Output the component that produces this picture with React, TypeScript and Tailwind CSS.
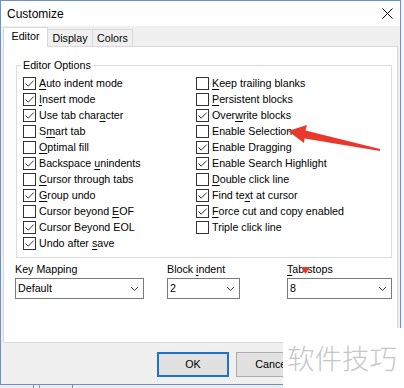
import React from "react";

const FONT = { fontFamily: '"Liberation Sans", Arial, sans-serif' };

function Mn({ t }: { t: string }) {
  const i = t.indexOf("&");
  if (i < 0) return <>{t}</>;
  return (
    <>
      {t.slice(0, i)}
      <span className="underline underline-offset-[2px]">{t.charAt(i + 1)}</span>
      {t.slice(i + 2)}
    </>
  );
}

function Box({ checked }: { checked: boolean }) {
  return (
    <span className="w-[13px] h-[13px] border border-[#333333] bg-white shrink-0 flex items-center justify-center">
      {checked && (
        <svg width="11" height="11" viewBox="0 0 11 11">
          <path d="M1.5 5.5 L4.2 8.2 L9.6 2.6" stroke="#333" strokeWidth="1" fill="none" />
        </svg>
      )}
    </span>
  );
}

function Check({ label, checked }: { label: string; checked: boolean }) {
  return (
    <div className="h-[16px] flex items-center gap-[3px] whitespace-nowrap">
      <Box checked={checked} />
      <span className="leading-[14px]">
        <Mn t={label} />
      </span>
    </div>
  );
}

const left: [string, boolean][] = [
  ["&Auto indent mode", true],
  ["&Insert mode", true],
  ["Use tab char&acter", true],
  ["S&mart tab", false],
  ["&Optimal fill", false],
  ["Backspace &unindents", true],
  ["&Cursor through tabs", false],
  ["&Group undo", true],
  ["Cursor beyond &EOF", false],
  ["Cursor Beyond EOL", true],
  ["Undo after &save", true],
];

const right: [string, boolean][] = [
  ["&Keep trailing blanks", false],
  ["&Persistent blocks", false],
  ["Over&write blocks", true],
  ["Enable Selection", false],
  ["Enable Dragging", true],
  ["Enable Search Highlight", true],
  ["&Double click line", false],
  ["Find te&xt at cursor", true],
  ["&Force cut and copy enabled", true],
  ["Triple click line", false],
];

function Chevron() {
  return (
    <svg width="9" height="6" viewBox="0 0 9 6">
      <path d="M1 1 L4.5 4.5 L8 1" stroke="#333" strokeWidth="1" fill="none" />
    </svg>
  );
}

function Combo({ w, value }: { w: string; value: string }) {
  return (
    <div className={`${w} h-[21px] border border-[#7a7a7a] bg-white flex items-center justify-between pl-[2px] pr-[4px]`}>
      <span>{value}</span>
      <Chevron />
    </div>
  );
}

export default function App() {
  return (
    <div className="w-[404px] h-[388px] bg-[#f4f4f4] overflow-hidden relative text-[10.7px] text-black" style={FONT}>
      <div className="w-[401px] h-[385px] border border-[#6c92c0] bg-[#f0f0f0] flex flex-col">
        {/* title bar */}
        <div className="h-[25px] shrink-0 bg-white flex items-center justify-between pl-[6px] pr-[7px]">
          <span className="text-[12px]">Customize</span>
          <svg width="11" height="11" viewBox="0 0 11 11">
            <path d="M0.5 0.5 L10.5 10.5 M10.5 0.5 L0.5 10.5" stroke="#000" strokeWidth="1" />
          </svg>
        </div>
        {/* tabs */}
        <div className="h-[20px] shrink-0 flex items-end pl-[2px] relative z-10">
          <div className="w-[45px] h-[20px] -mb-px bg-white border border-b-0 border-[#d9d9d9] flex items-center justify-center pb-[2px]">
            Editor
          </div>
          <div className="w-[45px] h-[17px] border border-l-0 border-b-0 border-[#d9d9d9] flex items-center justify-center">
            Display
          </div>
          <div className="w-[40px] h-[17px] border border-l-0 border-b-0 border-[#d9d9d9] flex items-center justify-center">
            Colors
          </div>
        </div>
        {/* panel */}
        <div className="ml-[2px] w-[395px] h-[297px] shrink-0 bg-white border border-[#d9d9d9] flex flex-col">
          <fieldset className="ml-[12px] mt-[11px] w-[376px] border border-[#dcdcdc] px-[4px] pt-[3px] pb-[6px]">
            <legend className="px-[2px] leading-[14px]">Editor Options</legend>
            <div className="grid grid-cols-[173px_1fr] pl-[2px]">
              <div className="flex flex-col">
                {left.map(([l, c]) => (
                  <Check key={l} label={l} checked={c} />
                ))}
              </div>
              <div className="flex flex-col">
                {right.map(([l, c]) => (
                  <Check key={l} label={l} checked={c} />
                ))}
              </div>
            </div>
          </fieldset>
          <div className="flex pl-[11px] mt-[4px]">
            <div className="flex flex-col gap-[2px]">
              <span className="leading-[14px]">Key Mapping</span>
              <Combo w="w-[129px]" value="Default" />
            </div>
            <div className="flex flex-col gap-[2px] ml-[23px]">
              <span className="leading-[14px]">
                Block <Mn t="&indent" />
              </span>
              <Combo w="w-[73px]" value="2" />
            </div>
            <div className="flex flex-col gap-[2px] ml-[47px]">
              <span className="leading-[14px]">
                <Mn t="&Tab stops" />
              </span>
              <Combo w="w-[105px]" value="8" />
            </div>
          </div>
        </div>
        {/* footer */}
        <div className="flex-1 flex justify-end items-start gap-[7px] pt-[9px] pr-[13px]">
          <button className="w-[72px] h-[25px] border-2 border-[#1f72c8] bg-[#e1e1e1] text-[10.7px]">OK</button>
          <button className="w-[72px] h-[25px] border border-[#adadad] bg-[#e1e1e1] text-[10.7px]">Cancel</button>
          <div className="w-[72px] h-[25px]" />
        </div>
      </div>
      {/* strip below the window */}
      <div className="h-[3px] flex bg-[#ececec]">
        <div className="ml-[33px] w-[1px] bg-[#8a8a8a]" />
        <div className="ml-[5px] w-[1px] bg-[#9a9a9a]" />
        <div className="ml-[32px] w-[1px] bg-[#8a8a8a]" />
      </div>
      {/* annotations */}
      <svg className="absolute left-0 top-0 pointer-events-none" width="404" height="388">
        <polygon
          points="288,131 307,125 305.5,130.5 380,149 380,151 304.5,138.5 304,143"
          fill="#e8392f"
        />
        <polygon points="301,267 310,267 305.5,274" fill="#e8392f" />
      </svg>
      <div
        className="absolute left-[283px] top-[328px] w-[121px] h-[60px] bg-white flex items-center pl-[4px] text-[27.5px] text-[#c6c6c6] font-light leading-none"
        style={{ fontFamily: '"Noto Sans CJK SC", sans-serif' }}
      >
        软件技巧
      </div>
    </div>
  );
}
